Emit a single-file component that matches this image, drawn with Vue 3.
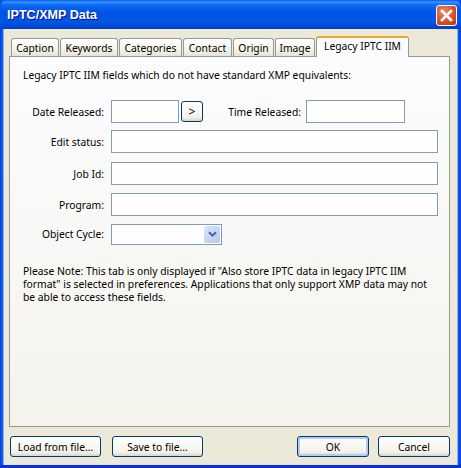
<script setup>
const tabs = [
  { label: 'Caption', width: 48 },
  { label: 'Keywords', width: 58 },
  { label: 'Categories', width: 63 },
  { label: 'Contact', width: 49 },
  { label: 'Origin', width: 41 },
  { label: 'Image', width: 40 },
  { label: 'Legacy IPTC IIM', width: 93, active: true }
]
</script>

<template>
  <div class="window">
    <div class="titlebar">
      <span class="title">IPTC/XMP Data</span>
      <button class="close" aria-label="Close">
        <svg width="13" height="13" viewBox="0 0 13 13">
          <path d="M2 2l9 9M11 2l-9 9" stroke="#fff" stroke-width="2.6" stroke-linecap="square" fill="none" />
        </svg>
      </button>
    </div>

    <div class="body">
      <div class="tabs">
        <div
          v-for="tab in tabs"
          :key="tab.label"
          class="tab"
          :class="{ active: tab.active }"
          :style="{ width: tab.width + 'px' }"
        >{{ tab.label }}</div>
      </div>

      <div class="panel">
        <p class="intro">Legacy IPTC IIM fields which do not have standard XMP equivalents:</p>

        <div class="form">
          <div class="row">
            <label class="lbl">Date Released:</label>
            <input class="inp date" type="text" />
            <button class="btn go">&gt;</button>
            <label class="lbl-time">Time Released:</label>
            <input class="inp time" type="text" />
          </div>
          <div class="row edit">
            <label class="lbl">Edit status:</label>
            <input class="inp wide" type="text" />
          </div>
          <div class="row job">
            <label class="lbl">Job Id:</label>
            <input class="inp wide" type="text" />
          </div>
          <div class="row">
            <label class="lbl">Program:</label>
            <input class="inp wide" type="text" />
          </div>
          <div class="row cycle">
            <label class="lbl">Object Cycle:</label>
            <div class="combo">
              <span class="arrow">
                <svg width="9" height="7" viewBox="0 0 9 7">
                  <path d="M1 1.2l3.5 3.5L8 1.2" stroke="#4d6185" stroke-width="2" fill="none" />
                </svg>
              </span>
            </div>
          </div>
        </div>

        <p class="note">Please Note: This tab is only displayed if "Also store IPTC data in legacy IPTC IIM format" is selected in preferences. Applications that only support XMP data may not be able to access these fields.</p>
      </div>

      <div class="footer">
        <button class="btn action">Load from file...</button>
        <button class="btn action save">Save to file...</button>
        <button class="btn action ok">OK</button>
        <button class="btn action cancel">Cancel</button>
      </div>
    </div>
  </div>
</template>

<style scoped>
.window {
  width: 461px;
  height: 468px;
  box-sizing: border-box;
  display: flex;
  flex-direction: column;
  background:
    linear-gradient(to top, #0831d9 3px, transparent 3px),
    linear-gradient(to right, #0a3fd0 0, #0a5cf0 2px, #0a5cf0 457px, #0a3fd0 461px);
  font-family: "Noto Sans", "DejaVu Sans", sans-serif;
  font-size: 10.3px;
  color: #000;
  overflow: hidden;
}
.titlebar {
  height: 29px;
  flex: none;
  display: flex;
  align-items: center;
  justify-content: space-between;
  padding: 2px 4px 0 7px;
  box-sizing: border-box;
  border-radius: 7px 7px 0 0;
  background: linear-gradient(to bottom, #0058e6 0, #3a93ff 2px, #0a6af4 5px, #0054e3 12px, #0055e5 22px, #0046d0 27px, #003dc0 29px);
}
.title {
  color: #fff;
  font-family: "Liberation Sans", sans-serif;
  font-weight: 700;
  font-size: 12.6px;
  margin-top: -2px;
  text-shadow: 1px 1px 0 #0f1089;
}
.close {
  width: 21px;
  height: 21px;
  padding: 0;
  display: flex;
  align-items: center;
  justify-content: center;
  border: 1px solid #fff;
  border-radius: 3px;
  background: radial-gradient(circle at 35% 30%, #ea8a6c, #d9502c 55%, #b6371a);
}
.body {
  flex: 1;
  margin: 0 3px 3px 3px;
  padding: 7px 7px 0 5px;
  background: #ece9d8;
  display: flex;
  flex-direction: column;
  border-left: 1px solid #8fb0ee;
  border-right: 1px solid #8fb0ee;
}
.tabs {
  display: flex;
  align-items: flex-end;
  height: 20px;
  padding-left: 2px;
  gap: 1px;
  position: relative;
  z-index: 1;
}
.tab {
  height: 18px;
  box-sizing: border-box;
  display: flex;
  align-items: center;
  justify-content: center;
  border: 1px solid #919b9c;
  border-bottom: 0;
  border-radius: 3px 3px 0 0;
  background: linear-gradient(to bottom, #fff, #f3f1e6 70%, #e6e3d4);
  white-space: nowrap;
}
.tab.active {
  height: 21px;
  margin-bottom: -1px;
  padding-bottom: 3px;
  background: #fcfcfe;
  border-top: 2px solid #f0a62c;
}
.panel {
  height: 371px;
  box-sizing: border-box;
  border: 1px solid #919b9c;
  background: linear-gradient(to bottom, #fcfcfe, #f4f3ec);
  padding: 0 12px;
  flex: none;
}
.intro {
  margin: 11px 0 0 1px;
  line-height: 15px;
}
.form {
  margin-top: 17px;
  display: flex;
  flex-direction: column;
  gap: 8px;
}
.row {
  display: flex;
  align-items: center;
  height: 23px;
}
.edit {
  margin-top: -1px;
}
.job {
  margin-top: 1px;
}
.cycle {
  align-items: flex-start;
}
.cycle .lbl {
  line-height: 21px;
}
.lbl {
  width: 82px;
  margin-right: 7px;
  text-align: right;
  flex: none;
}
.lbl-time {
  width: 98px;
  text-align: right;
  margin-right: 5px;
  flex: none;
}
.inp {
  height: 23px;
  box-sizing: border-box;
  border: 1px solid #7f9db9;
  background: #fff;
  padding: 0 3px;
  outline: none;
  flex: none;
}
.date { width: 68px; }
.time { width: 99px; }
.wide { width: 327px; }
.combo {
  width: 111px;
  height: 21px;
  box-sizing: border-box;
  border: 1px solid #7f9db9;
  background: #fff;
  display: flex;
  justify-content: flex-end;
  align-items: center;
  padding-right: 1px;
}
.arrow {
  width: 16px;
  height: 17px;
  display: flex;
  align-items: center;
  justify-content: center;
  border-radius: 2px;
  background: linear-gradient(135deg, #dbe5fb, #b3c8f5);
}
.note {
  margin: 18px 0 0 1px;
  line-height: 13px;
  width: 416px;
}
.btn {
  font: inherit;
  color: #000;
  border: 1px solid #003c74;
  border-radius: 3px;
  background: linear-gradient(to bottom, #fff, #f3f2ea 80%, #d9d5c6);
  padding: 0;
}
.go {
  width: 22px;
  height: 21px;
  margin-left: 2px;
  flex: none;
  font-size: 12px;
}
.footer {
  display: flex;
  margin-top: 9px;
  padding-left: 1px;
}
.action {
  width: 91px;
  height: 21px;
}
.save {
  margin-left: 11px;
}
.ok {
  width: 72px;
  margin-left: 94px;
  box-shadow: inset 0 0 0 2px #b5cbf0;
}
.cancel {
  width: 72px;
  margin-left: 9px;
}
</style>

<style>
html, body { margin: 0; background: #fff; }
</style>
